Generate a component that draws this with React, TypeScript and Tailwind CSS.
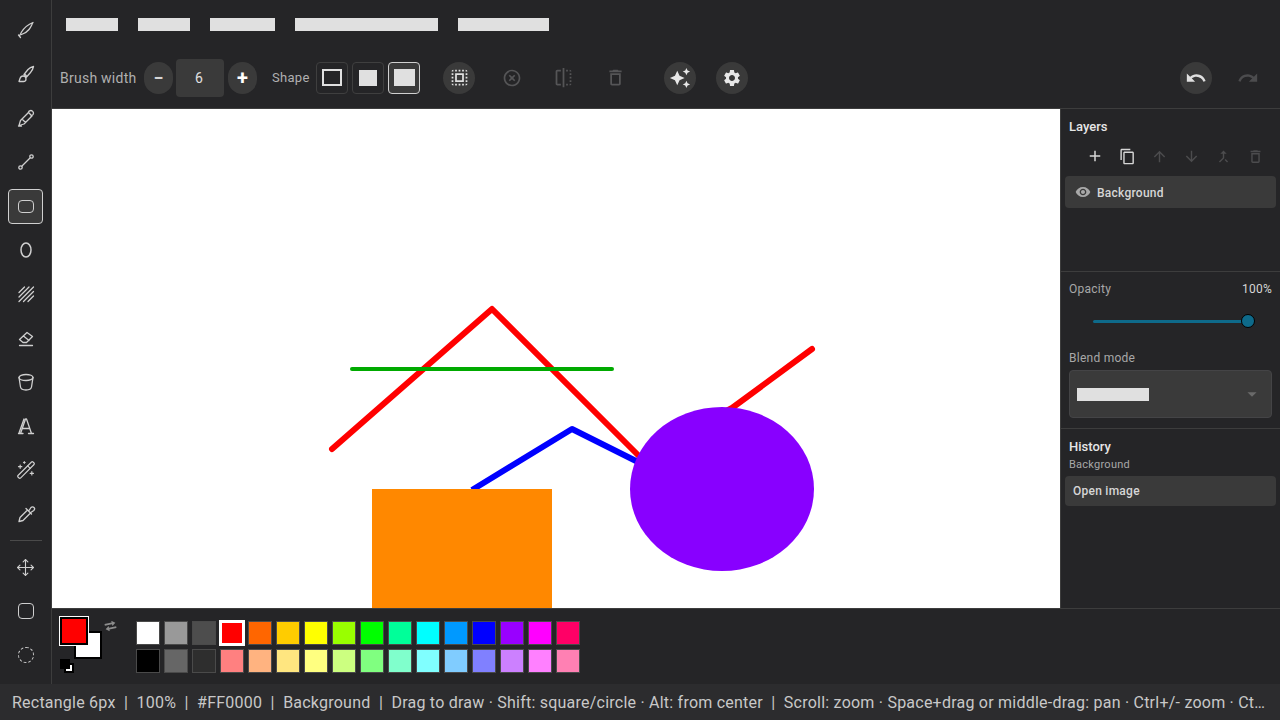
import { Move, WandSparkles } from "lucide-react";
import {
  MdAdd,
  MdArrowDownward,
  MdArrowDropDown,
  MdArrowUpward,
  MdAutoAwesome,
  MdCallMerge,
  MdOutlineContentCopy,
  MdOutlineDelete,
  MdOutlineHighlightOff,
  MdRedo,
  MdSelectAll,
  MdSettings,
  MdUndo,
  MdVisibility,
  MdFlip,
} from "react-icons/md";

const font = { fontFamily: "Roboto, sans-serif" };

// small outline drawings for the tool strip
const Stroke = ({ children }: { children: React.ReactNode }) => (
  <svg width="20" height="20" viewBox="0 0 20 20" fill="none" stroke="#cfcfcf" strokeWidth="1.3" strokeLinecap="round" strokeLinejoin="round">
    {children}
  </svg>
);

const tools: React.ReactNode[] = [
  <Stroke><path d="M3.500 16 5.500 12C8 8 12 4.500 17 2.500 15.500 5 15 7 13 9.500 11 12 8.500 13.500 5.500 14.500M2.500 15l2 2.500" /></Stroke>,
  <Stroke><path d="M8 10.500 12 5.500C13.500 4 15.500 3 17.500 2.500 17 5 16 7 14.500 8.500L10.500 13M8 10.500c1.500.2 2.500 1 2.500 2.500M3 17.500h4.500c1.500 0 2.500-1.200 2.500-2.500 0-1.700-1.300-3-3-3-1.500 0-2.500 1-3 2.500z" /></Stroke>,
  <Stroke><path d="M3 17.500 4.500 12.500 12.500 4.500 16 8 8 16zM12 5c.5-1.500 1.500-2.500 2.800-2.500s2.700 1.400 2.700 2.700-1 2.300-2.500 2.800M6 11l3.500 3.500M2.500 18h3" /></Stroke>,
  <Stroke><circle cx="4.500" cy="15.500" r="1.700" /><circle cx="15.500" cy="4.500" r="1.700" /><path d="M6 14 14 6" /></Stroke>,
  null,
  <Stroke><ellipse cx="10" cy="10" rx="5" ry="7" strokeWidth="1.500" /></Stroke>,
  <Stroke><path d="M3 8.500 8.500 3M3 13 13 3M3 17.500 17.500 3M7.500 17.500 17.500 7.500M12 17.500l5.500-5.500" /></Stroke>,
  <Stroke><path d="M3.500 11.500 11 4.500l5.500 4-6 6H7zM7.500 8 13 12.500M3.500 17.500h13" /></Stroke>,
  <Stroke><ellipse cx="10" cy="5.500" rx="7" ry="3" /><path d="M3 5.500 4.500 15c.3 2 2.500 3 5.500 3s5.200-1 5.500-3L17 5.500" /></Stroke>,
  <Stroke><path d="M2.500 17.500h4.500M12.500 17.500h5M4.500 17.500 9.500 3h1l5 14.500M7 12.500h6.500M8 3 3 17" /></Stroke>,
  <WandSparkles size={20} strokeWidth={1.4} color="#cfcfcf" />,
  <Stroke><path d="M3 17.500l1-4 7.500-7.500 3 3L7 16.500zM10 4.500l5.500 5.500M13 6.500l2-3c1-1 2.200-.8 3 0s.8 2-.2 3l-3 2" /></Stroke>,
];

const paletteTop = ["#ffffff", "#999999", "#4d4d4d", "#ff0000", "#ff6600", "#ffcc00", "#ffff00", "#99ff00", "#00ff00", "#00ff99", "#00ffff", "#0099ff", "#0000ff", "#9900ff", "#ff00ff", "#ff0066"];
const paletteBottom = ["#000000", "#666666", "#2e2e2e", "#ff8080", "#ffb380", "#ffe680", "#ffff80", "#ccff80", "#80ff80", "#80ffcc", "#80ffff", "#80ccff", "#8080ff", "#cc80ff", "#ff80ff", "#ff80b3"];

const menuWidths = ["w-[52px]", "w-[52px]", "w-[65px]", "w-[143px]", "w-[91px]"];

const RoundBtn = ({ children, className = "" }: { children: React.ReactNode; className?: string }) => (
  <div className={`flex h-8 w-8 shrink-0 items-center justify-center rounded-full ${className}`}>{children}</div>
);

const ToolSlot = ({ children }: { children: React.ReactNode }) => (
  <div className="flex h-11 w-9 shrink-0 items-center justify-center">{children}</div>
);

export default function App() {
  return (
    <div className="flex h-screen w-screen flex-col overflow-hidden bg-[#252527] text-[#d6d6d6]" style={font}>
      <div className="flex min-h-0 flex-1">
        {/* tool strip */}
        <aside className="flex w-[52px] shrink-0 flex-col items-center border-r border-[#3d3d3d] pt-2">
          {tools.map((t, i) => (
            <ToolSlot key={i}>
              {t ?? (
                <div className="flex h-[35px] w-[35px] items-center justify-center rounded border border-[#d0d0d0] bg-[#3a3a3a]">
                  <div className="h-[13px] w-4 rounded-sm border-[1.5px] border-[#cfcfcf]" />
                </div>
              )}
            </ToolSlot>
          ))}
          <div className="my-1 h-px w-8 shrink-0 bg-[#4a4a4a]" />
          <ToolSlot><Move size={19} strokeWidth={1.4} color="#cfcfcf" /></ToolSlot>
          <ToolSlot><div className="h-4 w-4 rounded-sm border-[1.5px] border-[#cfcfcf]" /></ToolSlot>
          <ToolSlot><div className="h-4 w-4 rounded-full border-[1.5px] border-dashed border-[#cfcfcf]" /></ToolSlot>
        </aside>

        <div className="flex min-w-0 flex-1 flex-col">
          {/* menu bar */}
          <div className="flex h-[50px] items-start gap-5 pl-[14px] pt-[18px]">
            {menuWidths.map((w, i) => (
              <div key={i} className={`h-[13px] bg-[#e0e0e0] ${w}`} />
            ))}
          </div>

          {/* options bar */}
          <div className="flex h-[59px] items-center border-b border-[#3d3d3d] pb-[3px] pl-2 pr-4">
            <span className="mr-2 w-[76px] text-sm tracking-[0.25px] whitespace-nowrap text-[#b0b0b0]">Brush width</span>
            <RoundBtn className="mr-[3px] w-[29px] bg-[#3a3a3a]"><span className="text-lg font-bold leading-none">−</span></RoundBtn>
            <div className="flex h-[38px] w-12 items-center justify-center rounded bg-[#3a3a3a] pr-[2px] text-sm text-[#e0e0e0]">6</div>
            <RoundBtn className="ml-1 w-[29px] bg-[#3a3a3a]"><span className="text-xl font-bold leading-none text-white">+</span></RoundBtn>
            <span className="ml-[15px] mr-[6px] w-[38px] text-[13px] tracking-[0.3px] whitespace-nowrap text-[#b0b0b0]">Shape</span>
            <div className="flex h-8 w-8 items-center justify-center rounded border border-[#3f3f3f]"><div className="h-[17px] w-5 border-2 border-[#e0e0e0]" /></div>
            <div className="ml-1 flex h-8 w-8 items-center justify-center rounded border border-[#3f3f3f]"><div className="h-4 w-[18px] bg-[#e0e0e0]" /></div>
            <div className="ml-1 flex h-8 w-8 items-center justify-center rounded border border-[#d0d0d0] bg-[#3a3a3a]"><div className="h-[17px] w-[21px] bg-[#e0e0e0]" /></div>
            <RoundBtn className="ml-[23px] bg-[#3a3a3a]"><MdSelectAll size={21} color="#e0e0e0" /></RoundBtn>
            <RoundBtn className="ml-[21px]"><MdOutlineHighlightOff size={20} color="#555557" /></RoundBtn>
            <RoundBtn className="ml-[19px]"><MdFlip size={21} color="#555557" /></RoundBtn>
            <RoundBtn className="ml-5"><MdOutlineDelete size={21} color="#555557" /></RoundBtn>
            <RoundBtn className="ml-[33px] bg-[#3a3a3a]"><MdAutoAwesome size={22} color="#e8e8e8" /></RoundBtn>
            <RoundBtn className="ml-5 bg-[#3a3a3a]"><MdSettings size={20} color="#e8e8e8" /></RoundBtn>
            <div className="flex-1" />
          </div>

          {/* canvas */}
          <div className="min-h-0 flex-1 bg-white">
            <svg width="1008" height="499" viewBox="52 109 1008 499" className="block" fill="none">
              <polyline points="332,449 492,309 640,457 732,408 812,349" stroke="#ff0000" strokeWidth="6" strokeLinecap="round" strokeLinejoin="round" />
              <line x1="352" y1="369" x2="612" y2="369" stroke="#00aa00" strokeWidth="4" strokeLinecap="round" />
              <polyline points="472,490 572,429 640,463" stroke="#0000ff" strokeWidth="6" strokeLinejoin="round" />
              <rect x="372" y="489" width="180" height="119" fill="#ff8800" />
              <ellipse cx="722" cy="489" rx="92" ry="82" fill="#8800ff" />
            </svg>
          </div>
        </div>

        {/* right panel */}
        <aside className="flex w-[220px] shrink-0 flex-col">
          <div className="flex h-[109px] shrink-0 items-start justify-end border-b border-[#3d3d3d] pr-4 pt-[62px]">
            <RoundBtn className="bg-[#3a3a3a]"><MdUndo size={22} color="#e0e0e0" /></RoundBtn>
            <RoundBtn className="ml-5"><MdRedo size={22} color="#4c4c4e" /></RoundBtn>
          </div>
          <div className="flex min-h-0 flex-1 flex-col border-l border-[#3d3d3d]">
            <div className="flex h-[163px] shrink-0 flex-col border-b border-[#3d3d3d] px-1">
              <div className="pl-1 pt-[10px] text-[13px] font-medium leading-[15px] text-[#e6e6e6]">Layers</div>
              <div className="mt-[6px] flex h-8 items-center justify-end pr-[5px]">
                <div className="flex w-8 justify-center"><MdAdd size={18} color="#d6d6d6" /></div>
                <div className="flex w-8 justify-center"><MdOutlineContentCopy size={17} color="#d6d6d6" /></div>
                <div className="flex w-8 justify-center"><MdArrowUpward size={17} color="#4c4c4e" /></div>
                <div className="flex w-8 justify-center"><MdArrowDownward size={17} color="#4c4c4e" /></div>
                <div className="flex w-8 justify-center"><MdCallMerge size={17} color="#4c4c4e" /></div>
                <div className="flex w-8 justify-center"><MdOutlineDelete size={17} color="#4c4c4e" /></div>
              </div>
              <div className="mt-1 flex h-8 items-center rounded bg-[#3a3a3a] pl-[10px]">
                <MdVisibility size={16} color="#a8a8a8" />
                <span className="ml-[6px] pt-px text-xs font-medium tracking-[0.25px] text-[#d6d6d6]">Background</span>
              </div>
            </div>
            <div className="flex h-[157px] shrink-0 flex-col border-b border-[#3d3d3d] px-2">
              <div className="flex justify-between pt-[10px] text-xs leading-[15px] tracking-[0.25px]">
                <span className="text-[#a8a8a8]">Opacity</span>
                <span className="text-[#d6d6d6]">100%</span>
              </div>
              <div className="mt-[18px] flex h-3 items-center pl-6 pr-[17px]">
                <div className="h-[3px] flex-1 rounded-full bg-[#0e6a8a]" />
                <div className="-ml-1 h-[14px] w-[14px] rounded-full border border-black bg-[#0e6a8a]" />
              </div>
              <div className="mt-[24px] text-xs leading-[15px] tracking-[0.25px] text-[#a8a8a8]">Blend mode</div>
              <div className="mt-1 flex h-12 items-center justify-between rounded border border-[#444446] bg-[#3a3a3a] pl-[7px] pr-2">
                <div className="h-[13px] w-[72px] bg-[#e0e0e0]" />
                <MdArrowDropDown size={22} color="#6a6a6a" />
              </div>
            </div>
            <div className="flex flex-1 flex-col px-1">
              <div className="pl-1 pt-[10px] text-[13px] font-medium leading-[15px] text-[#e6e6e6]">History</div>
              <div className="pl-1 pt-1 text-[11px] leading-[13px] tracking-[0.25px] text-[#a8a8a8]">Background</div>
              <div className="mt-[5px] flex h-[30px] items-center rounded bg-[#3a3a3a] pl-2 text-xs font-medium tracking-[0.25px] text-[#d6d6d6]">Open image</div>
            </div>
          </div>
        </aside>
      </div>

      {/* colour row */}
      <div className="flex h-[76px] shrink-0">
        <div className="w-[52px] shrink-0 border-r border-[#3d3d3d]" />
        <div className="flex flex-1 border-t border-[#3d3d3d]">
          <div className="relative w-[84px] shrink-0">
            <div className="absolute left-[22px] top-[22px] h-7 w-7 border-2 border-black bg-white" />
            <div className="absolute left-[7px] top-[7px] h-[30px] w-[30px] border border-white bg-black p-[2px]"><div className="h-full w-full bg-[#ff0000]" /></div>
            <div className="absolute left-[52px] top-[12px] -rotate-12 text-[#8c8c8c]">
              <svg width="13" height="10" viewBox="0 0 14 11" fill="currentColor" className="block"><path d="M9 0l4 3-4 3V4H1V2h8zM5 5v2h8v2H5v2L1 8z" /></svg>
            </div>
            <div className="absolute left-[12px] top-[54px] h-[10px] w-[10px] border-2 border-black bg-white" />
            <div className="absolute left-[8px] top-[50px] h-[10px] w-[10px] bg-black" />
          </div>
          <div className="flex flex-col gap-1 pt-[12px]">
            <div className="flex gap-1">
              {paletteTop.map((c, i) => (
                <div
                  key={c}
                  className={i === 3 ? "h-6 w-6 border-2 border-white outline outline-white" : "h-6 w-6 border border-[#4a4a4a]"}
                  style={{ backgroundColor: c }}
                />
              ))}
            </div>
            <div className="flex gap-1">
              {paletteBottom.map((c) => (
                <div key={c} className="h-6 w-6 border border-[#4a4a4a]" style={{ backgroundColor: c }} />
              ))}
            </div>
          </div>
        </div>
      </div>

      {/* status bar */}
      <div className="flex h-9 shrink-0 items-center bg-[#2c2c2e] px-3 pt-px text-base tracking-[0.23px] text-[#c8c8c8]">
        <span className="truncate whitespace-pre">
          {"Rectangle 6px  |  100%  |  #FF0000  |  Background  |  Drag to draw · Shift: square/circle · Alt: from center  |  Scroll: zoom · Space+drag or middle-drag: pan · Ctrl+/- zoom · Ctrl+0 fit · Ctrl+1 actual size"}
        </span>
      </div>
    </div>
  );
}
